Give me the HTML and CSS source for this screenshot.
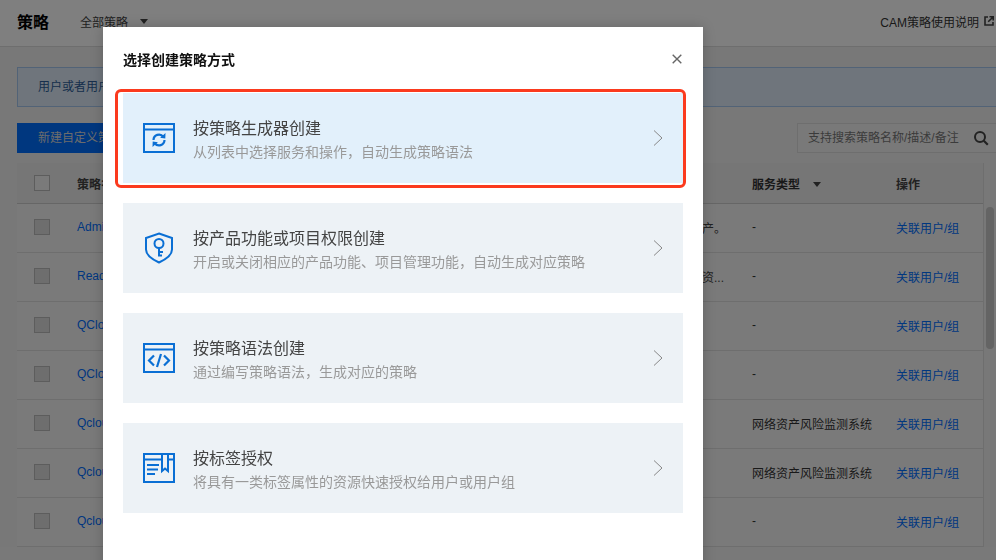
FILE: index.html
```html
<!DOCTYPE html>
<html lang="zh-CN">
<head>
<meta charset="utf-8">
<title>策略</title>
<link rel="stylesheet" href="styles.css">
</head>
<body>
<div class="page">
  <header class="topbar">
    <h1 class="page-title">策略</h1>
    <div class="filter"><span>全部策略</span><i class="caret"></i></div>
    <a class="doc-link">CAM策略使用说明
      <svg class="ext" width="10" height="10" viewBox="0 0 10 10"><path d="M4 1H1v8h8V6" fill="none" stroke="currentColor" stroke-width="1.6"/><path d="M5.5.8h3.7v3.7M9 1 4.2 5.8" fill="none" stroke="currentColor" stroke-width="1.6"/></svg>
    </a>
  </header>
  <main class="content">
    <div class="alert">用户或者用户组与策略关联后</div>
    <div class="toolbar">
      <button class="primary">新建自定义策略</button>
      <div class="search"><span>支持搜索策略名称/描述/备注</span>
        <svg width="16" height="16" viewBox="0 0 16 16"><circle cx="7" cy="7" r="5" fill="none" stroke="currentColor" stroke-width="2"/><path d="m10.800 10.800 4 4" stroke="currentColor" stroke-width="2.200"/></svg>
      </div>
    </div>
    <div class="table">
      <div class="row head">
        <span class="check"></span>
        <span class="name">策略名</span>
        <span class="desc"></span>
        <span class="service">服务类型<i class="caret small"></i></span>
        <span class="action">操作</span>
      </div>
      <div class="row"><span class="check off"></span><a class="name">AdministratorAccess</a><span class="desc">产。</span><span class="service">-</span><a class="action">关联用户/组</a></div>
      <div class="row"><span class="check off"></span><a class="name">ReadOnlyAccess</a><span class="desc">资...</span><span class="service">-</span><a class="action">关联用户/组</a></div>
      <div class="row"><span class="check off"></span><a class="name">QCloudResourceAccess</a><span class="desc"></span><span class="service">-</span><a class="action">关联用户/组</a></div>
      <div class="row"><span class="check off"></span><a class="name">QCloudFinanceAccess</a><span class="desc"></span><span class="service">-</span><a class="action">关联用户/组</a></div>
      <div class="row"><span class="check off"></span><a class="name">QcloudAAFullAccess</a><span class="desc"></span><span class="service">网络资产风险监测系统</span><a class="action">关联用户/组</a></div>
      <div class="row"><span class="check off"></span><a class="name">QcloudAAReadOnly</a><span class="desc"></span><span class="service">网络资产风险监测系统</span><a class="action">关联用户/组</a></div>
      <div class="row"><span class="check off"></span><a class="name">QcloudAccessRole</a><span class="desc"></span><span class="service">-</span><a class="action">关联用户/组</a></div>
    </div>
  </main>
  <div class="scrollbar"></div>
</div>

<div class="overlay"></div>

<section class="dialog">
  <div class="dialog-head">
    <h2>选择创建策略方式</h2>
    <svg class="close" width="10" height="10" viewBox="0 0 10 10"><path d="m.7.7 8.600 8.600M9.300.7.7 9.300" stroke="currentColor" stroke-width="1.400"/></svg>
  </div>
  <div class="options">
    <div class="option active">
      <svg class="icon" width="32" height="32" viewBox="0 0 32 32" fill="none" stroke="currentColor" stroke-width="2"><path d="M1 2h30v28H1zM1 7.500h30"/><path d="M10.500 18a5.500 5.500 0 0 1 9.800-3.300M21.500 18a5.500 5.500 0 0 1-9.800 3.300" stroke-width="2.200"/><path d="m22.500 11-.2 5.500-5.200-.7zM9.500 25l.2-5.500 5.200.7z" fill="currentColor" stroke="none"/></svg>
      <div class="option-text"><h3>按策略生成器创建</h3><p>从列表中选择服务和操作，自动生成策略语法</p></div>
      <svg class="chevron" width="11" height="18" viewBox="0 0 11 18"><path d="m1 1.500 8 7.500-8 7.500" fill="none" stroke="currentColor" stroke-width="1"/></svg>
    </div>
    <div class="option">
      <svg class="icon" width="32" height="32" viewBox="0 0 32 32" fill="none" stroke="currentColor" stroke-width="2"><path d="M16 1.500 29 6v11.500c0 6-6.500 10-13 13-6.500-3-13-7-13-13V6z"/><circle cx="16" cy="11.500" r="4.500"/><path d="M16 16v8.500M16 20h4M16 23.500h3"/></svg>
      <div class="option-text"><h3>按产品功能或项目权限创建</h3><p>开启或关闭相应的产品功能、项目管理功能，自动生成对应策略</p></div>
      <svg class="chevron" width="11" height="18" viewBox="0 0 11 18"><path d="m1 1.500 8 7.500-8 7.500" fill="none" stroke="currentColor" stroke-width="1"/></svg>
    </div>
    <div class="option">
      <svg class="icon" width="32" height="32" viewBox="0 0 32 32" fill="none" stroke="currentColor" stroke-width="2"><path d="M1 2h30v28H1zM1 7.500h30"/><path d="m11 13.500-5 5 5 5M21 13.500l5 5-5 5M18 12l-4 13" stroke-width="2.200"/></svg>
      <div class="option-text"><h3>按策略语法创建</h3><p>通过编写策略语法，生成对应的策略</p></div>
      <svg class="chevron" width="11" height="18" viewBox="0 0 11 18"><path d="m1 1.500 8 7.500-8 7.500" fill="none" stroke="currentColor" stroke-width="1"/></svg>
    </div>
    <div class="option">
      <svg class="icon" width="32" height="32" viewBox="0 0 32 32" fill="none" stroke="currentColor" stroke-width="2"><path d="M1 2h30v28H1zM1 7.500h18M25 7.500h6"/><path d="M19 2v17l3-2.500 3 2.500V2"/><path d="M4 13h12M4 17.500h11M4 22h8"/></svg>
      <div class="option-text"><h3>按标签授权</h3><p>将具有一类标签属性的资源快速授权给用户或用户组</p></div>
      <svg class="chevron" width="11" height="18" viewBox="0 0 11 18"><path d="m1 1.500 8 7.500-8 7.500" fill="none" stroke="currentColor" stroke-width="1"/></svg>
    </div>
  </div>
  <div class="highlight"></div>
</section>
</body>
</html>
```
FILE: styles.css
```css
* { box-sizing: border-box; }
html, body { margin: 0; height: 100%; overflow: hidden; }
body {
  font-family: "Liberation Sans", "Noto Sans CJK SC", sans-serif;
  font-size: 12px;
  color: #444;
  background: #f2f2f2;
}
h1, h2, h3, p { margin: 0; }

.page { height: 560px; overflow: hidden; position: relative; }

.topbar {
  height: 47px;
  display: flex;
  align-items: center;
  padding: 0 17px 4px;
  background: #fff;
  border-bottom: 1px solid #ddd;
}
.page-title { font-size: 16px; font-weight: 700; color: #000; width: 63px; }
.filter { display: flex; align-items: center; gap: 12px; color: #444; }
.caret {
  display: inline-block;
  width: 0; height: 0;
  border-left: 4px solid transparent;
  border-right: 4px solid transparent;
  border-top: 5px solid #444;
}
.caret.small { margin-left: 13px; vertical-align: 2px; }
.doc-link { margin-left: auto; color: #333; display: flex; align-items: center; gap: 5px; margin-right: -15px; }
.ext { color: #444; }

.content { padding: 20px 0 0 17px; background: #f1f1f1; }
.alert {
  height: 40px;
  line-height: 38px;
  padding-left: 20px;
  background: #deeaf8;
  border: 1px solid #a4c6ef;
  border-right: 0;
  color: #2e5f9a;
}
.toolbar { display: flex; justify-content: space-between; margin-top: 16px; height: 30px; }
.primary {
  width: 150px; height: 30px;
  border: 0;
  background: #006eff;
  color: #d8d8d8;
  font: inherit;
  text-align: left;
  padding: 0 0 3px 21px;
}
.search {
  width: 199px;
  height: 30px;
  display: flex;
  align-items: center;
  justify-content: space-between;
  padding: 0 0 0 10px;
  background: #f3f3f3;
  border: 1px solid #ddd;
  border-right: 0;
  color: #777;
}
.search span { padding-bottom: 3px; }
.search svg { color: #444; flex: none; margin-right: 7px; }

.table { margin: 10px 12px 0 0; border-right: 1px solid #ddd; }
.row {
  display: flex;
  align-items: center;
  height: 49px;
  padding-bottom: 2px;
  border-bottom: 1px solid #ddd;
  background: #f5f5f5;
}
.row.head { height: 41px; padding-bottom: 0; background: #ececec; font-weight: 700; color: #444; border-bottom-color: #ccc; }
.check {
  width: 16px; height: 16px;
  margin: 0 27px 0 17px;
  border: 1px solid #bbb;
  background: #f5f5f5;
  flex: none;
}
.check.off { background: #dcdcdc; }
.name { width: 241px; flex: none; padding-right: 125px; white-space: nowrap; overflow: hidden; color: #006eff; }
.row.head .name { color: #444; }
.desc { width: 408px; flex: none; padding-left: 384px; white-space: nowrap; color: #444; }
.service { width: 170px; flex: none; padding-left: 26px; color: #333; white-space: nowrap; }
.action { color: #006eff; white-space: nowrap; }
.row.head .action { color: #444; }

.scrollbar {
  position: absolute;
  top: 207px; right: 2px;
  width: 8px; height: 142px;
  border-radius: 4px;
  background: #c8c8c8;
}

.overlay { position: fixed; inset: 0; background: rgba(0, 0, 0, .5); }

.dialog {
  position: absolute;
  left: 103px; top: 27px;
  width: 600px; height: 560px;
  background: #fff;
  padding: 0 20px;
  box-shadow: 0 0 12px rgba(0, 0, 0, .2);
}
.dialog-head {
  height: 64px;
  margin-bottom: 2px;
  display: flex;
  align-items: center;
  justify-content: space-between;
  padding-right: 1px;
}
.dialog-head h2 { font-size: 14px; font-weight: 700; color: #111; }
.close { color: #666; }

.options { display: flex; flex-direction: column; gap: 20px; }
.option {
  height: 90px;
  display: flex;
  align-items: center;
  padding: 0 20px;
  background: #edf2f6;
}
.option.active { background: #e2f0fb; }
.icon { flex: none; color: #0a6fd4; }
.option-text { flex: 1; margin-left: 18px; padding-top: 4px; }
.option-text h3 { font-size: 16px; font-weight: 400; line-height: 22px; color: #444; }
.option-text p { font-size: 14px; line-height: 20px; margin-top: 2px; color: #999; }
.chevron { color: #888; flex: none; margin-right: -1px; }

.highlight {
  position: absolute;
  left: 12px; top: 62px;
  width: 571px; height: 99px;
  border: 3px solid #fb3a1e;
  border-radius: 6px;
  pointer-events: none;
}
```
